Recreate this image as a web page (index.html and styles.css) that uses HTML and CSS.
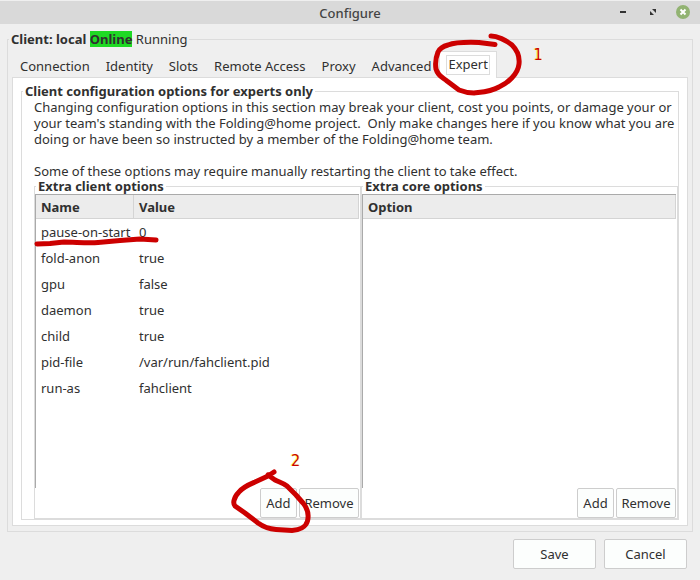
FILE: index.html
```html
<!DOCTYPE html>
<html lang="en">
<head>
    <meta charset="UTF-8">
    <meta name="viewport" content="width=device-width, initial-scale=1.0">
    <title>Configure</title>
    <link rel="stylesheet" href="styles.css">
</head>
<body>

<header class="titlebar">
    <h1>Configure</h1>
    <div class="window-buttons">
        <button type="button" aria-label="Minimize">
            <svg width="14" height="14" viewBox="0 0 14 14"><path d="M4 7h6" stroke="#333" stroke-width="2"/></svg>
        </button>
        <button type="button" aria-label="Restore">
            <svg width="14" height="14" viewBox="0 0 14 14"><path d="M6 4h4v4zM4 6v4h4z" fill="#333"/></svg>
        </button>
        <button type="button" aria-label="Close">
            <svg width="14" height="14" viewBox="0 0 14 14"><circle cx="7" cy="7" r="7" fill="#92b372"/><path d="M4.500 4.500l5 5M9.500 4.500l-5 5" stroke="#fff" stroke-width="2"/></svg>
        </button>
    </div>
</header>

<fieldset class="client">
    <legend><b>Client: local <span class="online">Online</span></b> Running</legend>

    <nav class="tabs">
        <button type="button">Connection</button>
        <button type="button">Identity</button>
        <button type="button">Slots</button>
        <button type="button">Remote Access</button>
        <button type="button">Proxy</button>
        <button type="button">Advanced</button>
        <div class="marked">
            <button type="button" class="active"><span>Expert</span></button>
            <svg class="mark mark-tab" width="92" height="66" viewBox="432 31 92 66">
                <path d="M492 36C498 36 507 40 513 45C518 50 521 55 520 64C519 74 509 83 500 87C491 92 483 92 475 93C469 93 465 92 460 90L448 81C443 77 439 76 437 69C436 63 437 57 439 52C441 48 445 46 449 45C457 42 466 42 480 42.500L496 44.500"/>
            </svg>
            <span class="number number-tab">1</span>
        </div>
    </nav>

    <main class="panel">
        <fieldset class="expert">
            <legend>Client configuration options for experts only</legend>
            <p>Changing configuration options in this section may break your client, cost you points, or damage your or<br>
            your team's standing with the Folding@home project.&nbsp; Only make changes here if you know what you are<br>
            doing or have been so instructed by a member of the Folding@home team.<br>
            <br>
            Some of these options may require manually restarting the client to take effect.</p>

            <div class="columns">
                <fieldset class="options">
                    <legend>Extra client options</legend>
                    <div class="list">
                        <table>
                            <thead>
                                <tr><th class="name">Name</th><th>Value</th></tr>
                            </thead>
                            <tbody>
                                <tr>
                                    <td class="marked">pause-on-start
                                        <svg class="mark mark-row" width="126" height="12" viewBox="34 235 126 12">
                                            <path d="M37 244L50 243.500L64 242C75 242 88 243.500 98 242.500L120 240.500L140 239L156 240"/>
                                        </svg>
                                    </td>
                                    <td>0</td>
                                </tr>
                                <tr><td>fold-anon</td><td>true</td></tr>
                                <tr><td>gpu</td><td>false</td></tr>
                                <tr><td>daemon</td><td>true</td></tr>
                                <tr><td>child</td><td>true</td></tr>
                                <tr><td>pid-file</td><td>/var/run/fahclient.pid</td></tr>
                                <tr><td>run-as</td><td>fahclient</td></tr>
                            </tbody>
                        </table>
                    </div>
                    <div class="actions">
                        <div class="marked">
                            <button type="button" class="btn">Add</button>
                            <svg class="mark mark-add" width="84" height="68" viewBox="230 468 84 68">
                                <path d="M274 472L268 476L255 482C248 485 243 487 239 492C233 498 233 504 235 506L245 513L258 523C265 528 270 529 276 529.500L292 530.500C299 530 306 527 307.500 521C309 515 308 509 303 503L296 495L287 486C283 483 279 482 275 480L268 475"/>
                            </svg>
                            <span class="number number-add">2</span>
                        </div>
                        <button type="button" class="btn btn-remove">Remove</button>
                    </div>
                </fieldset>

                <fieldset class="options">
                    <legend>Extra core options</legend>
                    <div class="list">
                        <table>
                            <thead>
                                <tr><th>Option</th></tr>
                            </thead>
                        </table>
                    </div>
                    <div class="actions">
                        <button type="button" class="btn">Add</button>
                        <button type="button" class="btn btn-remove">Remove</button>
                    </div>
                </fieldset>
            </div>
        </fieldset>
    </main>
</fieldset>

<footer class="footer">
    <button type="button" class="btn btn-wide">Save</button>
    <button type="button" class="btn btn-wide">Cancel</button>
</footer>

</body>
</html>
```
FILE: styles.css
```css
* {
    box-sizing: border-box;
}
body {
    margin: 0;
    min-height: 100vh;
    display: flex;
    flex-direction: column;
    background-color: #efefef;
    color: #303030;
    font-family: "Noto Sans", "Open Sans", sans-serif;
    font-size: 13px;
    line-height: 16px;
}
button {
    padding: 0;
    border: none;
    background: none;
    color: inherit;
    font: inherit;
}
fieldset {
    min-width: 0;
    margin: 0;
    padding: 0;
    border: 1px solid #dcdcdc;
    display: flex;
    flex-direction: column;
}
legend {
    margin-left: 1px;
    padding: 0 2px;
    font-weight: bold;
}

/* title bar */
.titlebar {
    height: 24px;
    display: grid;
    grid-template-columns: 1fr auto 1fr;
    align-items: center;
    border-top: 1px solid #efefef;
    background-color: #d9d9d9;
}
.titlebar h1 {
    grid-column: 2;
    margin: 0;
    font-size: 13px;
    font-weight: 500;
    color: #444;
}
.window-buttons {
    display: flex;
    justify-content: flex-end;
    gap: 16px;
    padding: 0 10px 1px 0;
}
.window-buttons svg {
    display: block;
}

/* client frame */
.client {
    flex: 1;
    margin: 7px 7px 0;
    padding: 4px 4px 5px;
}
.client > legend {
    margin-left: -3px;
    font-weight: normal;
}
.online {
    display: inline-block;
    background-color: #1fd924;
}

/* tabs */
.tabs {
    display: flex;
    height: 26px;
}
.tabs button {
    padding: 4px 8px 0;
}
.tabs .active {
    position: relative;
    height: 27px;
    padding: 0 6px;
    border: 1px solid #dcdcdc;
    border-bottom: none;
    background-color: #fff;
}
.active span {
    display: block;
    padding: 0 1px 2px;
    border: 1px solid #dcdcdc;
}
.panel {
    flex: 1;
    display: flex;
    padding: 5px 8px;
    border: 1px solid #dcdcdc;
    background-color: #fff;
}
.expert {
    flex: 1;
    padding-left: 12px;
}
.expert > legend {
    margin-left: -11px;
}
.expert p {
    height: 79px;
    margin: 0;
    white-space: nowrap;
}

/* option lists */
.columns {
    flex: 1;
    display: grid;
    grid-template-columns: 33fr 32fr;
}
.options {
    padding-right: 1px;
}
.list {
    flex: 1;
    min-height: 294px;
    border-top: 1px solid #aaa;
    border-left: 1px solid #aaa;
}
table {
    width: 100%;
    border-collapse: separate;
    border-spacing: 0;
}
th, td {
    height: 26px;
    padding: 0 5px;
    text-align: left;
    white-space: nowrap;
}
th {
    height: 24px;
    border-right: 1px solid #d4d4d4;
    border-bottom: 1px solid #d4d4d4;
    background-color: #ececec;
}
.name {
    width: 98px;
}
td:first-child {
    padding-right: 3px;
}
.actions {
    display: flex;
    justify-content: flex-end;
    gap: 2px;
}
.btn {
    width: 37px;
    height: 30px;
    border: 1px solid #cdcdcd;
    border-radius: 2px;
    background-color: #fcfefd;
}
.btn-remove {
    width: 60px;
}
.btn-wide {
    width: 83px;
}
.footer {
    display: flex;
    justify-content: flex-end;
    gap: 8px;
    padding: 7px 13px 12px;
}

/* hand drawn marks */
.marked {
    position: relative;
}
.mark {
    position: absolute;
    z-index: 1;
    fill: none;
    stroke: #c00;
    stroke-width: 5;
    stroke-linecap: round;
    stroke-linejoin: round;
    pointer-events: none;
}
.mark-tab {
    left: -8px;
    top: -20px;
}
.mark-row {
    left: -2px;
    top: 16px;
}
.mark-add {
    left: -30px;
    top: -20px;
}
.number {
    position: absolute;
    font-family: "DejaVu Sans Condensed", "DejaVu Sans", sans-serif;
    font-size: 16px;
    color: #c00;
    text-shadow: -1px 0 #ff6, 1px 0 #ffa;
}
.number-tab {
    left: 94px;
    top: -4px;
}
.number-add {
    left: 31px;
    top: -35px;
}
```
